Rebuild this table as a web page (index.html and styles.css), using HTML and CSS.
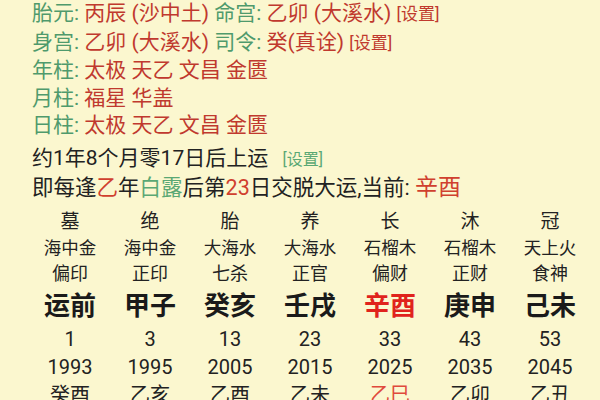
FILE: index.html
```html
<!DOCTYPE html>
<html lang="zh-CN">
<head>
<meta charset="utf-8">
<link rel="stylesheet" href="styles.css">
</head>
<body>
<div class="page">
  <div class="info">
    <div class="line"><span class="lb">胎元:</span> <span class="val">丙辰 (沙中土)</span> <span class="lb">命宫:</span> <span class="val">乙卯 (大溪水)</span> <span class="set-r">[设置]</span></div>
    <div class="line"><span class="lb">身宫:</span> <span class="val">乙卯 (大溪水)</span> <span class="lb">司令:</span> <span class="val">癸(真诠)</span> <span class="set-r">[设置]</span></div>
    <div class="line"><span class="lb">年柱:</span> <span class="val">太极 天乙 文昌 金匮</span></div>
    <div class="line"><span class="lb">月柱:</span> <span class="val">福星 华盖</span></div>
    <div class="line"><span class="lb">日柱:</span> <span class="val">太极 天乙 文昌 金匮</span></div>
  </div>
  <div class="yun">
    <div class="yline y1">约1年8个月零17日后上运 <span class="set-g">[设置]</span></div>
    <div class="yline y2">即每逢<span class="red">乙</span>年<span class="green">白露</span>后第<span class="red">23</span>日交脱大运,当前: <span class="cur">辛酉</span></div>
  </div>
  <div class="table">
    <div class="col"><div class="c1">墓</div><div class="c2">海中金</div><div class="c3">偏印</div><div class="c4">运前</div><div class="c5">1</div><div class="c6">1993</div><div class="c7">癸酉</div></div>
    <div class="col"><div class="c1">绝</div><div class="c2">海中金</div><div class="c3">正印</div><div class="c4">甲子</div><div class="c5">3</div><div class="c6">1995</div><div class="c7">乙亥</div></div>
    <div class="col"><div class="c1">胎</div><div class="c2">大海水</div><div class="c3">七杀</div><div class="c4">癸亥</div><div class="c5">13</div><div class="c6">2005</div><div class="c7">乙酉</div></div>
    <div class="col"><div class="c1">养</div><div class="c2">大海水</div><div class="c3">正官</div><div class="c4">壬戌</div><div class="c5">23</div><div class="c6">2015</div><div class="c7">乙未</div></div>
    <div class="col"><div class="c1">长</div><div class="c2">石榴木</div><div class="c3">偏财</div><div class="c4 hot">辛酉</div><div class="c5">33</div><div class="c6">2025</div><div class="c7 hot2">乙巳</div></div>
    <div class="col"><div class="c1">沐</div><div class="c2">石榴木</div><div class="c3">正财</div><div class="c4">庚申</div><div class="c5">43</div><div class="c6">2035</div><div class="c7">乙卯</div></div>
    <div class="col"><div class="c1">冠</div><div class="c2">天上火</div><div class="c3">食神</div><div class="c4">己未</div><div class="c5">53</div><div class="c6">2045</div><div class="c7">乙丑</div></div>
  </div>
</div>
</body>
</html>
```

FILE: styles.css
```css
html, body {
  margin: 0;
  padding: 0;
  background: #fbf7cf;
  width: 600px;
  height: 400px;
  overflow: hidden;
  font-family: Roboto, "Noto Sans CJK SC", sans-serif;
  color: #222;
}
.page {
  padding-left: 32px;
}
.info {
  margin-top: 0;
  font-size: 21px;
  line-height: 27.6px;
  white-space: nowrap;
}
.lb { color: #4f9a6c; }
.val { color: #c0392e; }
.set-r { color: #c0392e; font-size: 17px; }
.yun {
  margin-top: 3px;
  line-height: 30px;
  white-space: nowrap;
  color: #222;
}
.y1 { font-size: 21px; height: 30px; }
.y2 { font-size: 21.5px; height: 30px; }
.set-g { color: #5aa874; font-size: 16px; margin-left: 9px; }
.red { color: #d0402e; }
.green { color: #5aa874; }
.cur { color: #d0402e; font-size: 23px; }
.table {
  margin-left: -2px;
  margin-top: 6px;
  display: flex;
}
.col {
  width: 80px;
  display: flex;
  flex-direction: column;
  align-items: center;
  color: #222;
}
.col > div { white-space: nowrap; }
.c1 { font-size: 19px; height: 26px; line-height: 26px; }
.c2 { font-size: 17.5px; height: 26px; line-height: 26px; }
.c3 { font-size: 18px; height: 26px; line-height: 26px; }
.c4 { font-size: 26px; font-weight: bold; height: 38px; line-height: 38px; color: #1a1a1a; }
.c5 { font-size: 20px; height: 28px; line-height: 28px; }
.c6 { font-size: 20px; height: 28px; line-height: 28px; }
.c7 { font-size: 20px; height: 28px; line-height: 28px; }
.hot { color: #e0231c; }
.hot2 { color: #e04a3c; }
```
